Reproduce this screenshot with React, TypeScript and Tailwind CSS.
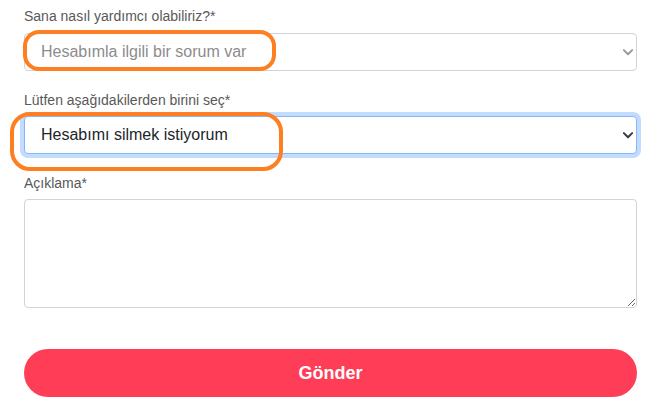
const font = { fontFamily: '"Liberation Sans", Arial, sans-serif' };

function Chevron({ color }: { color: string }) {
    return (
        <svg className="pointer-events-none absolute right-[3px] top-1/2 -translate-y-1/2" width="12" height="12" viewBox="0 0 16 16" fill="none">
            <path d="m2.5 5.5 5.5 5.5 5.5-5.5" stroke={color} strokeWidth="2.6" strokeLinecap="round" strokeLinejoin="round" />
        </svg>
    );
}

function Field({ label, children }: { label: string; children: React.ReactNode }) {
    return (
        <div className="flex flex-col">
            <label className="mb-[6px] text-[14px] leading-[20px] text-[#595959]">{label}</label>
            {children}
        </div>
    );
}

export default function App() {
    return (
        <div className="relative h-[402px] w-[657px] overflow-hidden bg-white" style={font}>
            <div className="flex w-[613px] flex-col pl-[24px] pt-[6px]" style={{ boxSizing: 'content-box' }}>
                <div className="flex flex-col gap-[19px]">
                    <Field label="Sana nasıl yardımcı olabiliriz?*">
                        <div className="relative mt-[1px]">
                            <select
                                defaultValue="q"
                                className="h-[38px] w-full appearance-none rounded-[4px] border border-[#ced4da] bg-white pl-[16px] text-[16px] text-[#8c8c8c] outline-none"
                                style={font}
                            >
                                <option value="q">Hesabımla ilgili bir sorum var</option>
                            </select>
                            <Chevron color="#9a9a9a" />
                        </div>
                    </Field>
                    <Field label="Lütfen aşağıdakilerden birini seç*">
                        <div className="relative">
                            <select
                                defaultValue="d"
                                className="h-[38px] w-full appearance-none rounded-[4px] border border-[#86b7fe] bg-white pl-[16px] text-[16px] text-[#212529] shadow-[0_0_0_4px_rgba(13,110,253,0.25)] outline-none"
                                style={font}
                            >
                                <option value="d">Hesabımı silmek istiyorum</option>
                            </select>
                            <Chevron color="#343a40" />
                        </div>
                    </Field>
                    <Field label="Açıklama*">
                        <textarea className="h-[109px] w-full rounded-[4px] border border-[#ced4da] bg-white px-3 py-2 text-[16px] outline-none" />
                    </Field>
                </div>
                <button className="mt-[41px] h-[48px] w-full rounded-full bg-[#ff3d56] text-[18px] font-bold text-white" style={font}>
                    Gönder
                </button>
            </div>

            <div className="pointer-events-none absolute left-[23px] top-[30px] h-[41px] w-[253px] rounded-[16px] border-[4px] border-[#fd7f22]" />
            <div className="pointer-events-none absolute left-[10px] top-[112px] h-[59px] w-[273px] rounded-[20px] border-[4px] border-[#fd7f22]" />
        </div>
    );
}
